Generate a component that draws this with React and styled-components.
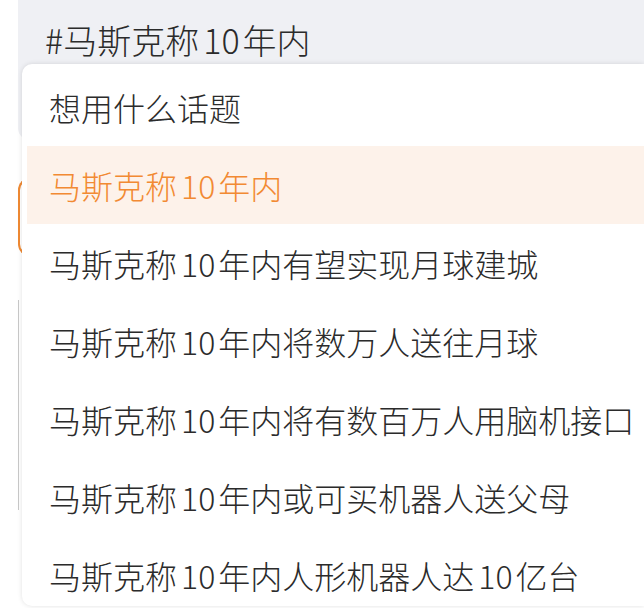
import React from "react";
import styled, { createGlobalStyle } from "styled-components";

const GlobalStyle = createGlobalStyle`
  html, body {
    margin: 0;
    padding: 0;
    background: #ffffff;
  }
  body {
    font-family: "Noto Sans CJK SC", "Noto Sans", sans-serif;
    color: #2b2b2b;
    overflow: hidden;
  }
`;

const topics = [
  "马斯克称10年内",
  "马斯克称10年内有望实现月球建城",
  "马斯克称10年内将数万人送往月球",
  "马斯克称10年内将有数百万人用脑机接口",
  "马斯克称10年内或可买机器人送父母",
  "马斯克称10年内人形机器人达10亿台",
];

const Page = styled.div`
  position: relative;
  height: 608px;
  padding-left: 18px;
  overflow: hidden;
`;

const Panel = styled.div`
  display: flex;
  flex-direction: column;
`;

const SearchBox = styled.div`
  height: 140px;
  box-sizing: border-box;
  padding: 16px 0 0 27px;
  background: #eff0f4;
  border-radius: 0 0 0 12px;
  font-size: 34px;
  font-weight: 300;
  line-height: 48px;
  color: #2b2b2b;
`;

const SendButton = styled.div`
  margin-top: 38px;
  height: 74px;
  border: 2px solid #f08a33;
  border-right: none;
  border-radius: 12px 0 0 12px;
`;

const HiddenText = styled.div`
  margin-top: 44px;
  height: 210px;
  border-left: 1px solid #c8c8c8;
`;

const Dropdown = styled.ul`
  position: absolute;
  top: 64px;
  left: 22px;
  right: 0;
  height: 542px;
  margin: 0;
  padding: 4px 0 0 5px;
  box-sizing: border-box;
  list-style: none;
  background: #ffffff;
  border-radius: 10px 0 0 10px;
  box-shadow: 0 0 5px rgba(0, 0, 0, 0.12);
  overflow: hidden;
`;

const Item = styled.li`
  height: 78px;
  display: flex;
  align-items: center;
  padding-left: 22px;
  font-size: 32px;
  font-weight: 300;
  white-space: nowrap;
  color: ${(p) => (p.$active ? "#f28a33" : "#2b2b2b")};
  background: ${(p) => (p.$active ? "#fdf2ea" : "transparent")};
`;

const Num = styled.span`
  margin: 0 3px 0 4px;
`;

// CJK 与数字之间留一点空隙
const spaced = (text) =>
  text
    .split(/(\d+)/)
    .map((part, i) => (/^\d+$/.test(part) ? <Num key={i}>{part}</Num> : part));

export default function App() {
  return (
    <>
      <GlobalStyle />
      <Page>
        <Panel>
          <SearchBox>#{spaced("马斯克称10年内")}</SearchBox>
          <SendButton />
          <HiddenText />
        </Panel>
        <Dropdown>
          <Item>想用什么话题</Item>
          {topics.map((t, i) => (
            <Item key={t} $active={i === 0}>
              {spaced(t)}
            </Item>
          ))}
        </Dropdown>
      </Page>
    </>
  );
}
